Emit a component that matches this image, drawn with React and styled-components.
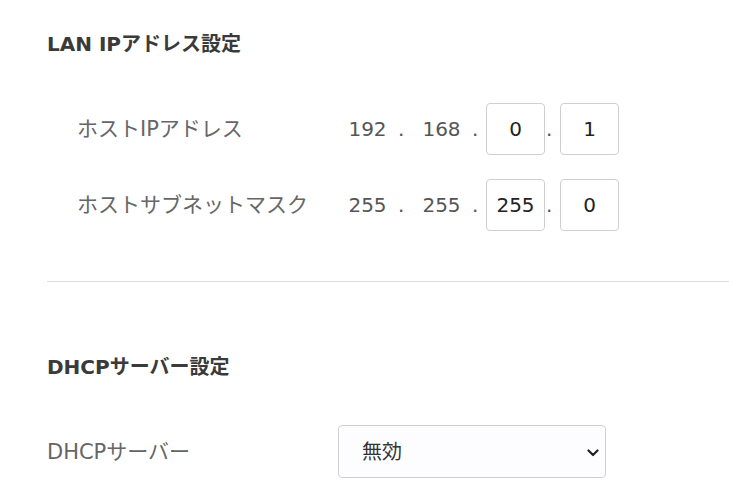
import React from "react";
import styled, { createGlobalStyle } from "styled-components";

const Global = createGlobalStyle`
  html, body { margin: 0; padding: 0; background: #ffffff; }
  body { font-family: "DejaVu Sans", "Noto Sans CJK JP", sans-serif; }
`;

const Page = styled.div`
  padding: 30px 0 0 47px;
  font-size: 20px;
`;

const Heading = styled.h2`
  margin: 0;
  font-size: 20px;
  line-height: 28px;
  font-weight: 700;
  color: #3a3a3a;
  margin-top: ${(p) => p.$top || 0}px;
`;

const Rows = styled.div`
  display: flex;
  flex-direction: column;
  gap: 24px;
  margin-top: ${(p) => p.$top || 0}px;
  padding-left: ${(p) => p.$indent || 0}px;
`;

const Row = styled.div`
  display: flex;
  align-items: center;
  height: ${(p) => p.$h || 52}px;
`;

const Label = styled.div`
  width: ${(p) => p.$width}px;
  flex: none;
  color: #666666;
  font-size: 21px;
  line-height: 28px;
`;

const IpGroup = styled.div`
  display: flex;
  align-items: center;
`;

const Octet = styled.div`
  width: 59px;
  text-align: center;
  color: #555555;
  font-size: 20px;
  line-height: 28px;
`;

const OctetInput = styled.input`
  box-sizing: border-box;
  width: 59px;
  height: 52px;
  margin: 0;
  padding: 0;
  border: 1px solid #cfcfcf;
  border-radius: 4px;
  background: #ffffff;
  text-align: center;
  font-family: inherit;
  font-size: 20px;
  color: #222222;
  outline: none;
`;

const Dot = styled.span`
  width: 15px;
  padding-left: 1px;
  box-sizing: border-box;
  color: #555555;
  font-size: 20px;
  line-height: 28px;
`;

const Divider = styled.hr`
  margin: 50px 0 0 0;
  border: none;
  border-top: 1px solid #dedede;
  height: 0;
`;

const SelectWrap = styled.div`
  position: relative;
  width: 268px;
  height: 53px;
`;

const Select = styled.select`
  appearance: none;
  -webkit-appearance: none;
  box-sizing: border-box;
  width: 100%;
  height: 100%;
  margin: 0;
  padding: 0 40px 0 23px;
  border: 1px solid #cfcfcf;
  border-radius: 4px;
  background: #fdfdff;
  font-family: inherit;
  font-size: 20px;
  color: #333333;
  outline: none;
`;

const Chevron = styled.svg`
  position: absolute;
  right: 7px;
  top: 50%;
  width: 12px;
  height: 8px;
  margin-top: -3px;
  pointer-events: none;
`;

function IpField({ fixed, editable }) {
  return (
    <IpGroup>
      {fixed.map((v, i) => (
        <React.Fragment key={i}>
          <Octet>{v}</Octet>
          <Dot>.</Dot>
        </React.Fragment>
      ))}
      <OctetInput defaultValue={editable[0]} />
      <Dot>.</Dot>
      <OctetInput defaultValue={editable[1]} />
    </IpGroup>
  );
}

export default function App() {
  return (
    <>
      <Global />
      <Page>
        <Heading>LAN IPアドレス設定</Heading>
        <Rows $top={45} $indent={30}>
          <Row>
            <Label $width={261}>ホストIPアドレス</Label>
            <IpField fixed={["192", "168"]} editable={["0", "1"]} />
          </Row>
          <Row>
            <Label $width={261}>ホストサブネットマスク</Label>
            <IpField fixed={["255", "255"]} editable={["255", "0"]} />
          </Row>
        </Rows>
        <Divider />
        <Heading $top={71}>DHCPサーバー設定</Heading>
        <Rows $top={44}>
          <Row $h={53}>
            <Label $width={291}>DHCPサーバー</Label>
            <SelectWrap>
              <Select defaultValue="off">
                <option value="off">無効</option>
                <option value="on">有効</option>
              </Select>
              <Chevron viewBox="0 0 12 8">
                <path d="M1.5 1.5 L6 6 L10.5 1.5" fill="none" stroke="#222" strokeWidth="2.2" strokeLinecap="round" strokeLinejoin="round" />
              </Chevron>
            </SelectWrap>
          </Row>
        </Rows>
      </Page>
    </>
  );
}
